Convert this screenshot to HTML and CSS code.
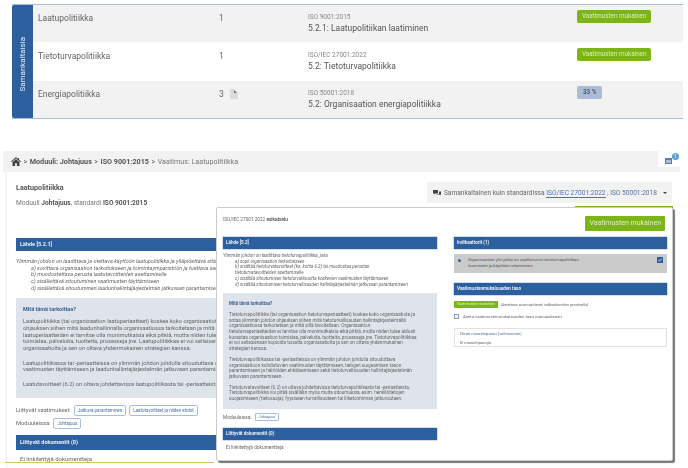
FILE: index.html
```html
<!DOCTYPE html>
<html lang="fi">
<head>
<meta charset="utf-8">
<title>Vaatimus: Laatupolitiikka</title>
<link rel="stylesheet" href="styles.css">
</head>
<body>
<section class="similar">
  <div class="similar-side"><span>Samankaltaisia</span></div>
  <div class="similar-rows">
    <div class="row">
      <div class="row-name">Laatupolitiikka</div>
      <div class="row-count">1</div>
      <div class="row-std"><small>ISO 9001:2015</small><span>5.2.1: Laatupolitiikan laatiminen</span></div>
      <div><span class="badge badge-green">Vaatimusten mukainen</span></div>
    </div>
    <div class="row row-white">
      <div class="row-name">Tietoturvapolitiikka</div>
      <div class="row-count">1</div>
      <div class="row-std"><small>ISO/IEC 27001:2022</small><span>5.2: Tietoturvapolitiikka</span></div>
      <div><span class="badge badge-green">Vaatimusten mukainen</span></div>
    </div>
    <div class="row">
      <div class="row-name">Energiapolitiikka</div>
      <div class="row-count">3
        <svg class="doc-icon" width="8" height="10" viewBox="0 0 8 10"><path d="M0 0h4l4 4v6H0z" fill="#dcdcdc"/><path d="M4 1l3 3H4z" fill="#777"/></svg>
      </div>
      <div class="row-std"><small>ISO 50001:2018</small><span>5.2: Organisaation energiapolitiikka</span></div>
      <div><span class="badge badge-blue">33 %</span></div>
    </div>
  </div>
</section>

<section class="page">
  <nav class="crumbs">
    <svg width="10" height="9" viewBox="0 0 10 9"><path d="M5 0L0 4.500l.6.7L5 1.400l4.400 3.800.6-.7-2-1.700V1H7v.9zM1.500 5.300V9h2.600V6.200h1.800V9h2.600V5.300L5 2.300z" fill="#444"/></svg>
    <span class="sep">&gt;</span><b>Moduuli: Johtajuus</b>
    <span class="sep">&gt;</span><b>ISO 9001:2015</b>
    <span class="sep">&gt;</span><span class="crumb-now">Vaatimus: Laatupolitiikka</span>
    <span class="cal">
      <svg width="7" height="7" viewBox="0 0 7 7"><path d="M0 1h7v6H0z" fill="#5d7ea6"/><path d="M1 3h5v3H1z" fill="#a9bcd3"/></svg>
      <i>1</i>
    </span>
  </nav>

  <div class="card">
    <div class="card-head">
      <div>
        <h1>Laatupolitiikka</h1>
        <p class="sub">Moduuli <b>Johtajuus</b>, standardi <b>ISO 9001:2015</b></p>
      </div>
      <div class="same">
        <svg width="8" height="6" viewBox="0 0 8 6"><path d="M0 0h5v3.500H2L1 4.600V3.500H0zM6 1.500h2v3H7.400v1L6.300 4.500H3.500V4H6z" fill="#444"/></svg>
        <span>Samankaltainen kuin standardissa <a class="on">ISO/IEC 27001:2022</a> , <a>ISO 50001:2018</a></span>
        <em class="caret"></em>
      </div>
    </div>
    <h2 class="bar bar-first">Lähde [5.2.1]</h2>
    <p class="quote">Ylimmän johdon on laadittava ja otettava käyttöön laatupolitiikka ja ylläpidettävä sitä, joka:<br>
      <span>a) sovittava organisaation tarkoitukseen ja toimintaympäristöön ja tuettava sen strategista suuntaa</span><br>
      <span>b) muodostettava perusta laatutavoitteiden asettamiselle</span><br>
      <span>c) sisällettävä sitoutuminen vaatimusten täyttämiseen</span><br>
      <span>d) sisällettävä sitoutuminen laadunhallintajärjestelmän jatkuvaan parantamiseen</span></p>
    <div class="info">
      <h3>Mitä tämä tarkoittaa?</h3>
      <p>Laatupolitiikka (tai organisaation laatuperiaatteet) koskee koko organisaatiota ja antaa ylimmän johdon<br>ohjauksen siihen mitä laadunhallinnalla organisaatiossa tarkoitetaan ja mitä sillä tavoitellaan. Organisaation<br>laatuperiaatteiden ei tarvitse olla monimutkaisia eikä pitkiä, mutta niiden tulee aidosti kuvastaa organisaation<br>toimialaa, palveluita, tuotteita, prosesseja jne. Laatupolitiikkaa ei voi sellaisenaan kopioida toiselta<br>organisaatiolta ja sen on oltava yhdenmukainen strategian kanssa.</p>
      <p>Laatupolitiikassa tai -periaatteissa on ylimmän johdon johdolla sitouduttava organisaatioon kohdistuvien<br>vaatimusten täyttämiseen ja laadunhallintajärjestelmän jatkuvaan parantamiseen.</p>
      <p>Laatutavoitteet (6.2) on oltava johdettavissa laatupolitiikasta tai -periaatteista.</p>
    </div>
    <div class="links links-first">Liittyvät vaatimukset: <a class="chip">Jatkuva parantaminen</a> <a class="chip">Laatutavoitteet ja niiden ehdot</a></div>
    <div class="links">Moduuleissa: <a class="chip">Johtajuus</a></div>
    <h2 class="bar bar-docs">Liittyvät dokumentit (0)</h2>
    <p class="nodocs">Ei linkitettyjä dokumentteja</p>
  </div>

  <div class="green-edge"></div>
  <div class="yellow-edge"></div>

  <aside class="preview">
    <div class="preview-head">
      <div class="preview-title">ISO/IEC 27001:2022 <b>esikatselu</b></div>
      <span class="btn">Vaatimusten mukainen</span>
    </div>
    <div class="preview-cols">
      <div class="preview-main">
        <h2 class="pbar">Lähde [5.2]</h2>
        <p class="pquote">Ylimmän johdon on laadittava tietoturvapolitiikka, joka<br>
          <span>a) sopii organisaation tarkoitukseen</span><br>
          <span>b) sisältää tietoturvatavoitteet (ks. kohta 6.2) tai muodostaa perustan</span><br>
          <span>tietoturvatavoitteiden asettamiselle</span><br>
          <span>c) sisältää sitoutumisen tietoturvallisuutta koskevien vaatimusten täyttämiseen</span><br>
          <span>d) sisältää sitoutumisen tietoturvallisuuden hallintajärjestelmän jatkuvaan parantamiseen</span></p>
        <div class="pinfo">
          <h3>Mitä tämä tarkoittaa?</h3>
          <p>Tietoturvapolitiikka (tai organisaation tietoturvaperiaatteet) koskee koko organisaatiota ja<br>antaa ylimmän johdon ohjauksen siihen mitä tietoturvallisuuden hallintajärjestelmällä<br>organisaatiossa tarkoitetaan ja mitä sillä tavoitellaan. Organisaation<br>tietoturvaperiaatteiden ei tarvitse olla monimutkaisia eikä pitkiä, mutta niiden tulee aidosti<br>kuvastaa organisaation toimialaa, palveluita, tuotteita, prosesseja jne. Tietoturvapolitiikkaa<br>ei voi sellaisenaan kopioida toiselta organisaatiolta ja sen on oltava yhdenmukainen<br>strategian kanssa.</p>
          <p>Tietoturvapolitiikassa tai -periaatteissa on ylimmän johdon johdolla sitouduttava<br>organisaatioon kohdistuvien vaatimusten täyttämiseen, tietojen suojaamisen tason<br>parantamiseen ja häiriöiden ehkäisemiseen sekä tietoturvallisuuden hallintajärjestelmän<br>jatkuvaan parantamiseen .</p>
          <p>Tietoturvatavoitteet (6.2) on oltava johdettavissa tietoturvapolitiikasta tai -periaatteista.<br>Tietoturvapolitiikka voi pitää sisällään myös muita sitoumuksia, esim. henkilötietojen<br>suojaamiseen (tietosuoja), fyysiseen turvallisuuteen tai liiketoiminnan jatkuvuuteen.</p>
        </div>
        <div class="plinks">Moduuleissa: <a class="pchip">Johtajuus</a></div>
        <h2 class="pbar">Liittyvät dokumentit (0)</h2>
        <p class="pnodocs">Ei linkitettyjä dokumentteja</p>
      </div>
      <div class="preview-side">
        <h2 class="pbar">Indikaattorit (1)</h2>
        <div class="indicator">
          <i class="dot"></i>
          <span>Organisaation ylin johto on osallistunut tietoturvapolitiikan<br>luomiseen ja käyttöön ottamiseen</span>
          <svg class="check" width="6" height="6" viewBox="0 0 6 6"><path d="M0 0h6v6H0z" fill="#2b5f9e"/><path d="M1.300 3l1.200 1.200 2.200-2.400" stroke="#fff" fill="none" stroke-width=".8"/></svg>
        </div>
        <h2 class="pbar bar-level">Vaatimustenmukaisuuden taso</h2>
        <div class="level"><span class="tag">Vaatimusten mukainen</span><small>(Asetetaan automaattisesti indikaattoreiden perusteella)</small></div>
        <label class="manual"><i class="box"></i>Aseta vaatimustenmukaisuuden taso manuaalisesti</label>
        <div class="notes"><span>Omat muistiinpanot (valinnainen)</span><p>Ei muistiinpanoja</p></div>
      </div>
    </div>
  </aside>
</section>
</body>
</html>
```

FILE: styles.css
```css
* { box-sizing: border-box; }
html, body { margin: 0; padding: 0; }
body {
  width: 688px;
  height: 468px;
  overflow: hidden;
  background: #fff;
  font-family: Roboto, "Liberation Sans", sans-serif;
  color: #555;
  filter: blur(0.5px);
}
h1, h2, h3, p { margin: 0; }
a { color: inherit; text-decoration: none; }

/* top table */
.similar {
  margin: 4px 5px 0 12px;
  height: 115px;
  display: flex;
  border-top: 1px solid #a9bcd8;
  border-bottom: 1px solid #a9bcd8;
}
.similar-side {
  width: 21px;
  background: #2b5f9e;
  border-radius: 2px 0 0 2px;
  display: flex;
  align-items: center;
  justify-content: center;
}
.similar-side span {
  writing-mode: vertical-rl;
  transform: rotate(180deg);
  color: #e6edf6;
  font-size: 8px;
  margin-top: 6px;
}
.similar-rows { flex: 1; display: flex; flex-direction: column; gap: 1px; }
.row {
  flex: 1;
  background: #f2f2f2;
  display: grid;
  grid-template-columns: 181px 89px 269px 1fr;
  padding: 8px 0 0 5px;
  font-size: 8.500px;
}
.row-white { background: #fff; }
.row-name { color: #666; }
.row-count { display: flex; align-items: flex-start; gap: 6px; color: #666; }
.row-std { display: flex; flex-direction: column; gap: 2px; }
.row-std small { font-size: 6.500px; color: #888; }
.row-std span { color: #555; }
.row > div:last-child { margin-top: -3px; }
.badge {
  display: inline-block;
  font-size: 6.300px;
  line-height: 13px;
  height: 13px;
  padding: 0 5px;
  border-radius: 2px;
}
.badge-green { background: #7cb518; color: #dcefb5; }
.badge-blue { background: #abbdd6; color: #4f5f75; font-weight: 700; padding: 0 6px; }

/* page */
.page { position: relative; margin-top: 32px; }
.crumbs {
  margin: 0 8px 0 3px;
  height: 21px;
  padding: 0 8px;
  background: #f2f2f2;
  display: flex;
  align-items: center;
  gap: 2.500px;
  font-size: 7.200px;
  color: #555;
  position: relative;
}
.crumb-now { color: #777; }
.cal {
  position: absolute;
  right: 0;
  top: 0;
  width: 22px;
  height: 16px;
  background: #fff;
  border-radius: 2px;
}
.cal svg { position: absolute; left: 7px; top: 6px; }
.cal i {
  position: absolute;
  left: 14px;
  top: 2px;
  width: 7px;
  height: 7px;
  border-radius: 50%;
  background: #5aa0cc;
  color: #fff;
  font-size: 5px;
  line-height: 7px;
  font-style: normal;
  text-align: center;
}
.card {
  margin: 0 8px 0 7px;
  padding: 10px 8px 0 9px;
  height: 295px;
  background: #fff;
  box-shadow: -1px 0 1px #eee;
  overflow: hidden;
}
.card-head { display: flex; justify-content: space-between; align-items: flex-start; height: 55px; }
h1 { font-size: 7.200px; font-weight: 700; color: #555; line-height: 9px; padding-top: 1px; }
.sub { font-size: 6.600px; margin-top: 7px; color: #777; }
.sub b { color: #555; }
.same {
  display: flex;
  align-items: center;
  gap: 3px;
  height: 21px;
  padding: 0 5px 0 6px;
  background: #f2f2f2;
  font-size: 6.600px;
  color: #666;
}
.same a { color: #52729c; }
.same a.on { border-bottom: 1px solid #52729c; }
.caret { width: 0; height: 0; border: 2px solid transparent; border-top: 2.500px solid #444; border-bottom: 0; margin-left: 3px; }
.bar {
  background: #2b5f9e;
  color: #e8eef6;
  font-size: 5.500px;
  font-weight: 700;
  line-height: 13px;
  height: 13px;
  padding-left: 4px;
  width: 655px;
}
.bar-first { margin-top: 1px; }
.quote {
  font-size: 5.500px;
  font-style: italic;
  line-height: 6.700px;
  white-space: nowrap;
  margin-top: 7px;
  color: #666;
}
.quote span { padding-left: 15px; }
.info {
  margin-top: 6px;
  height: 100px;
  background: #dfe4ec;
  padding: 8px 7px;
  font-size: 5.700px;
  line-height: 6.700px;
  white-space: nowrap;
  width: 640px;
}
.info h3 { font-size: 5.500px; color: #3e5f8f; font-weight: 700; margin-bottom: 6px; }
.info p { margin-bottom: 8px; color: #666; }
.links { font-size: 5.800px; color: #666; margin-top: 4px; height: 9px; display: flex; align-items: center; gap: 3px; }
.links-first { margin-top: 8px; }
.chip {
  font-size: 4.500px;
  border: 1px solid #a9bcd8;
  border-radius: 2px;
  padding: 2px 3px;
  color: #52729c;
  line-height: 5px;
}
.bar-docs { margin-top: 7px; height: 15px; line-height: 15px; }
.nodocs { font-size: 6px; padding: 5px 0 0 4px; color: #666; }

.green-edge {
  position: absolute;
  left: 575px;
  top: 55px;
  width: 98px;
  height: 4px;
  background: #7cb518;
}
.yellow-edge {
  position: absolute;
  left: 5px;
  top: 311px;
  width: 209px;
  height: 1px;
  background: #e0c060;
}

/* preview window */
.preview {
  position: absolute;
  left: 216px;
  top: 56px;
  width: 457px;
  height: 254px;
  padding: 5px 7px 0 6px;
  background: #fff;
  border: 1px solid #ccc;
  border-radius: 2px;
  box-shadow: 2px 2px 1px #777;
}
.preview-head { display: flex; justify-content: space-between; height: 24px; padding-top: 3px; }
.preview-title { font-size: 4.700px; color: #666; padding-top: 1px; }
.preview-title b { font-weight: 500; color: #444; }
.btn {
  background: #7cb518;
  color: #def0bd;
  font-size: 7px;
  line-height: 15px;
  height: 15px;
  padding: 0 4px;
  border-radius: 1px;
}
.preview-cols { display: grid; grid-template-columns: 214px 213px; column-gap: 17px; }
.pbar {
  background: #2b5f9e;
  color: #e8eef6;
  font-size: 4.600px;
  font-weight: 700;
  line-height: 12px;
  height: 12px;
  padding-left: 3px;
  box-shadow: 0 0 0 .5px #a9bcd8;
}
.pquote {
  font-size: 4.500px;
  font-style: italic;
  line-height: 5.700px;
  margin-top: 4px;
  color: #666;
  white-space: nowrap;
}
.pquote span { padding-left: 12px; }
.pinfo {
  margin-top: 6px;
  height: 116px;
  background: #dfe4ec;
  padding: 8px 6px;
  font-size: 4.700px;
  line-height: 5.700px;
  white-space: nowrap;
}
.pinfo h3 { font-size: 4.500px; color: #3e5f8f; font-weight: 700; margin-bottom: 5px; }
.pinfo p { margin-bottom: 5px; color: #666; }
.plinks { font-size: 4.800px; margin-top: 4px; height: 8px; display: flex; align-items: center; gap: 3px; color: #666; }
.pchip { font-size: 3.800px; border: 1px solid #a9bcd8; border-radius: 1px; padding: 1px 3px; color: #52729c; line-height: 4px; }
.plinks + .pbar { margin-top: 7px; }
.pnodocs { font-size: 4.800px; padding: 5px 0 0 3px; color: #666; }
.indicator {
  position: relative;
  margin-top: 5px;
  height: 19px;
  background: #cbcbcb;
  display: flex;
  padding: 3px 0 0 14px;
  font-size: 4.300px;
  line-height: 6px;
  color: #555;
}
.dot { position: absolute; left: 4px; top: 5px; width: 3px; height: 3px; border-radius: 50%; background: #2b5f9e; }
.check { position: absolute; right: 4px; top: 3px; }
.bar-level { margin-top: 10px; }
.level { display: flex; align-items: center; gap: 3px; margin-top: 6px; height: 7px; }
.tag { background: #7cb518; color: #e4f2c9; font-size: 3.700px; line-height: 7px; padding: 0 3px; border-radius: 1px; }
.level small { font-size: 3.500px; color: #666; }
.manual { display: flex; align-items: center; gap: 4px; margin-top: 5px; height: 6px; font-size: 4.300px; color: #666; }
.box { width: 5px; height: 5px; border: .5px solid #8a9cb8; background: #f4f6f9; }
.notes {
  margin-top: 9px;
  height: 19px;
  border: 1px solid #e2e2e2;
  padding: 2px 5px;
  font-size: 4.200px;
  color: #52729c;
  line-height: 5px;
}
.notes p { margin-top: 4px; font-style: italic; color: #666; }
```
